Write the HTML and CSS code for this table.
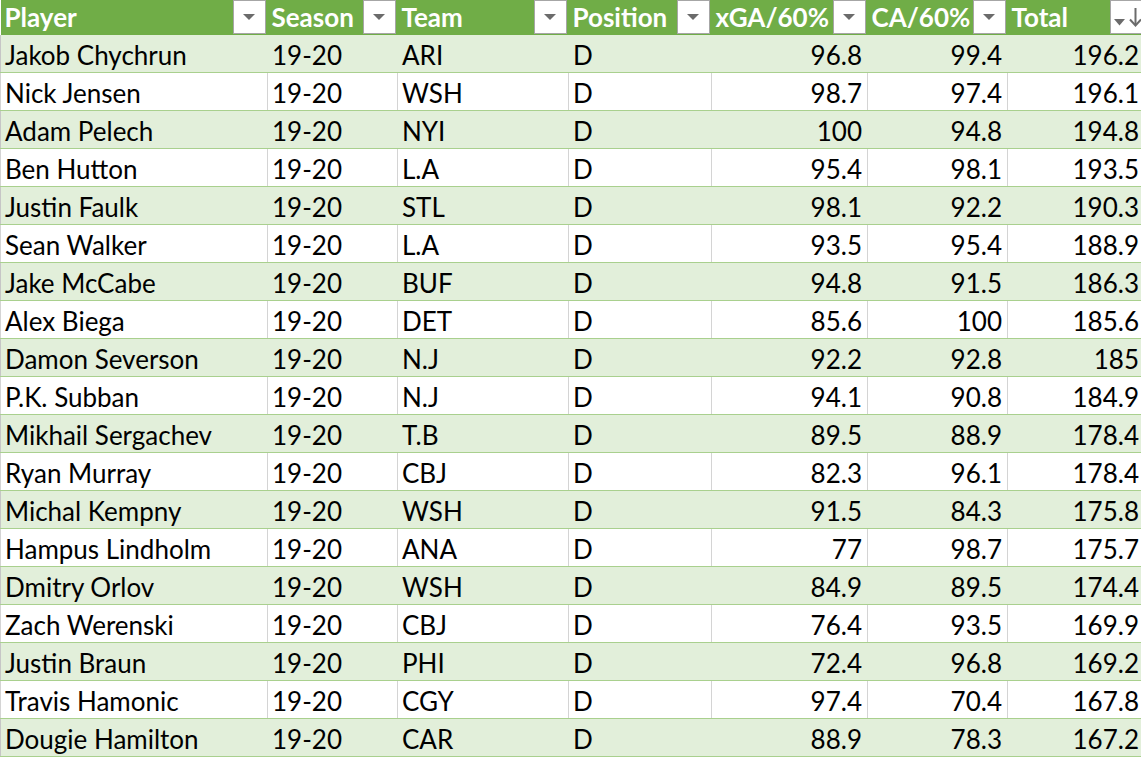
FILE: index.html
```html
<!DOCTYPE html>
<html>
<head>
<meta charset="utf-8">
<link rel="stylesheet" href="styles.css">
</head>
<body>
<table class="sheet">
  <colgroup>
    <col class="c-player"><col class="c-season"><col class="c-team"><col class="c-pos"><col class="c-xga"><col class="c-ca"><col class="c-total">
  </colgroup>
  <thead>
    <tr>
      <th><div class="hd"><span>Player</span><span class="fbtn"><svg width="12" height="6" viewBox="0 0 12 6"><path d="M0 0h12L6 6z" fill="#6b6b6b"/></svg></span></div></th>
      <th><div class="hd"><span>Season</span><span class="fbtn"><svg width="12" height="6" viewBox="0 0 12 6"><path d="M0 0h12L6 6z" fill="#6b6b6b"/></svg></span></div></th>
      <th><div class="hd"><span>Team</span><span class="fbtn"><svg width="12" height="6" viewBox="0 0 12 6"><path d="M0 0h12L6 6z" fill="#6b6b6b"/></svg></span></div></th>
      <th><div class="hd"><span>Position</span><span class="fbtn"><svg width="12" height="6" viewBox="0 0 12 6"><path d="M0 0h12L6 6z" fill="#6b6b6b"/></svg></span></div></th>
      <th><div class="hd"><span>xGA/60%</span><span class="fbtn"><svg width="12" height="6" viewBox="0 0 12 6"><path d="M0 0h12L6 6z" fill="#6b6b6b"/></svg></span></div></th>
      <th><div class="hd"><span>CA/60%</span><span class="fbtn"><svg width="12" height="6" viewBox="0 0 12 6"><path d="M0 0h12L6 6z" fill="#6b6b6b"/></svg></span></div></th>
      <th><div class="hd"><span>Total</span><span class="fbtn sort"><svg width="31" height="31" viewBox="0 0 31 31"><path d="M3 18h11l-5.5 6.5z" fill="#6b6b6b"/><path d="M24.5 7v17" stroke="#6b6b6b" stroke-width="2"/><path d="M19 18.5l5.5 6 5.5-6" stroke="#6b6b6b" stroke-width="2" fill="none"/></svg></span></div></th>
    </tr>
  </thead>
  <tbody>
    <tr><td>Jakob Chychrun</td><td>19-20</td><td>ARI</td><td>D</td><td class="n">96.8</td><td class="n">99.4</td><td class="n">196.2</td></tr>
    <tr><td>Nick Jensen</td><td>19-20</td><td>WSH</td><td>D</td><td class="n">98.7</td><td class="n">97.4</td><td class="n">196.1</td></tr>
    <tr><td>Adam Pelech</td><td>19-20</td><td>NYI</td><td>D</td><td class="n">100</td><td class="n">94.8</td><td class="n">194.8</td></tr>
    <tr><td>Ben Hutton</td><td>19-20</td><td>L.A</td><td>D</td><td class="n">95.4</td><td class="n">98.1</td><td class="n">193.5</td></tr>
    <tr><td>Justin Faulk</td><td>19-20</td><td>STL</td><td>D</td><td class="n">98.1</td><td class="n">92.2</td><td class="n">190.3</td></tr>
    <tr><td>Sean Walker</td><td>19-20</td><td>L.A</td><td>D</td><td class="n">93.5</td><td class="n">95.4</td><td class="n">188.9</td></tr>
    <tr><td>Jake McCabe</td><td>19-20</td><td>BUF</td><td>D</td><td class="n">94.8</td><td class="n">91.5</td><td class="n">186.3</td></tr>
    <tr><td>Alex Biega</td><td>19-20</td><td>DET</td><td>D</td><td class="n">85.6</td><td class="n">100</td><td class="n">185.6</td></tr>
    <tr><td>Damon Severson</td><td>19-20</td><td>N.J</td><td>D</td><td class="n">92.2</td><td class="n">92.8</td><td class="n">185</td></tr>
    <tr><td>P.K. Subban</td><td>19-20</td><td>N.J</td><td>D</td><td class="n">94.1</td><td class="n">90.8</td><td class="n">184.9</td></tr>
    <tr><td>Mikhail Sergachev</td><td>19-20</td><td>T.B</td><td>D</td><td class="n">89.5</td><td class="n">88.9</td><td class="n">178.4</td></tr>
    <tr><td>Ryan Murray</td><td>19-20</td><td>CBJ</td><td>D</td><td class="n">82.3</td><td class="n">96.1</td><td class="n">178.4</td></tr>
    <tr><td>Michal Kempny</td><td>19-20</td><td>WSH</td><td>D</td><td class="n">91.5</td><td class="n">84.3</td><td class="n">175.8</td></tr>
    <tr><td>Hampus Lindholm</td><td>19-20</td><td>ANA</td><td>D</td><td class="n">77</td><td class="n">98.7</td><td class="n">175.7</td></tr>
    <tr><td>Dmitry Orlov</td><td>19-20</td><td>WSH</td><td>D</td><td class="n">84.9</td><td class="n">89.5</td><td class="n">174.4</td></tr>
    <tr><td>Zach Werenski</td><td>19-20</td><td>CBJ</td><td>D</td><td class="n">76.4</td><td class="n">93.5</td><td class="n">169.9</td></tr>
    <tr><td>Justin Braun</td><td>19-20</td><td>PHI</td><td>D</td><td class="n">72.4</td><td class="n">96.8</td><td class="n">169.2</td></tr>
    <tr><td>Travis Hamonic</td><td>19-20</td><td>CGY</td><td>D</td><td class="n">97.4</td><td class="n">70.4</td><td class="n">167.8</td></tr>
    <tr><td>Dougie Hamilton</td><td>19-20</td><td>CAR</td><td>D</td><td class="n">88.9</td><td class="n">78.3</td><td class="n">167.2</td></tr>
  </tbody>
</table>
</body>
</html>
```

FILE: styles.css
```css
html, body {
  margin: 0;
  padding: 0;
  background: #ffffff;
  overflow: hidden;
}
body {
  width: 1141px;
  height: 757px;
  font-family: Lato, "Open Sans", sans-serif;
}
.sheet {
  table-layout: fixed;
  border-collapse: collapse;
  width: 1144px;
  font-size: 26px;
  color: #000;
}
.c-player { width: 267px; }
.c-season { width: 130px; }
.c-team { width: 171px; }
.c-pos { width: 143px; }
.c-xga { width: 156px; }
.c-ca { width: 140px; }
.c-total { width: 137px; }

thead th {
  background: #70ad47;
  color: #ffffff;
  font-weight: bold;
  text-align: left;
  height: 35px;
  padding: 0;
  vertical-align: top;
}
.hd {
  display: flex;
  justify-content: space-between;
  align-items: flex-start;
  height: 35px;
  padding-left: 4px;
  padding-right: 2px;
  line-height: 35px;
  white-space: nowrap;
  overflow: hidden;
}
.fbtn {
  flex: none;
  width: 31px;
  height: 32px;
  border: 1px solid #a6a6a6;
  background: #ffffff;
  display: flex;
  align-items: center;
  justify-content: center;
  box-sizing: content-box;
}
.fbtn svg { display: block; }
.fbtn.sort {
  align-items: flex-start;
}
tbody td {
  height: 33px;
  padding: 4px 5px 0 4px;
  border-bottom: 1px solid #a9d08e;
  border-right: 1px solid #d4d4d4;
  white-space: nowrap;
  overflow: hidden;
  line-height: 33px;
  vertical-align: middle;
}
tbody td:first-child { border-left: 1px solid #d4d4d4; }
tbody tr:nth-child(odd) td {
  background: #e2efda;
  border-right-color: #e2efda;
}
tbody tr:nth-child(odd) td:first-child { border-left-color: #c6c6c6; }
td.n { text-align: right; }
```
